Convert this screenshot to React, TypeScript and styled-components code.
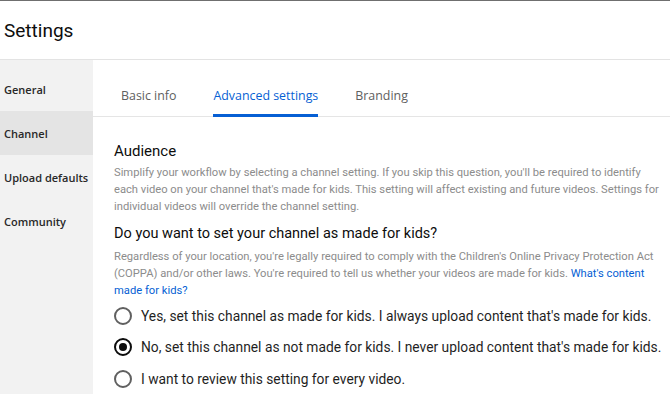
import styled, { createGlobalStyle } from 'styled-components';

const GlobalStyle = createGlobalStyle`
  html, body {
    margin: 0;
    padding: 0;
    background: #fff;
  }
  body {
    font-family: Roboto, "Liberation Sans", sans-serif;
    color: #0d0d0d;
  }
  * {
    box-sizing: border-box;
  }
`;

const Page = styled.div`
  display: flex;
  flex-direction: column;
  height: 394px;
  overflow: hidden;
  border-top: 1px solid #6f6f6f;
`;

const Header = styled.header`
  flex-shrink: 0;
  height: 59px;
  padding: 0 4px;
  display: flex;
  align-items: center;
  border-bottom: 1px solid #e3e3e3;
`;

const Title = styled.h1`
  margin: 0;
  font-size: 19px;
  font-weight: 400;
  color: #0d0d0d;
`;

const Body = styled.div`
  flex: 1;
  display: flex;
  min-height: 0;
`;

const Sidebar = styled.nav`
  width: 93px;
  flex-shrink: 0;
  padding-top: 7px;
  background: #f2f2f2;
  display: flex;
  flex-direction: column;
`;

const SideItem = styled.div<{ $active?: boolean }>`
  height: 44px;
  flex-shrink: 0;
  padding: 0 4px;
  display: flex;
  align-items: center;
  font-family: "Open Sans", "Liberation Sans", sans-serif;
  font-size: 11px;
  font-weight: 600;
  color: #282828;
  white-space: nowrap;
  background: ${(p) => (p.$active ? '#e4e4e4' : 'transparent')};
`;

const Main = styled.main`
  flex: 1;
  min-width: 0;
  display: flex;
  flex-direction: column;
  overflow: hidden;
`;

const TabBar = styled.div`
  flex-shrink: 0;
  height: 57px;
  padding-left: 28px;
  display: flex;
  align-items: flex-end;
  gap: 37px;
  border-bottom: 1px solid #e5e5e5;
`;

const Tab = styled.div<{ $active?: boolean }>`
  line-height: 18px;
  padding-bottom: 9px;
  font-family: "Open Sans", "Liberation Sans", sans-serif;
  font-size: 12.4px;
  font-weight: ${(p) => (p.$active ? 500 : 400)};
  color: ${(p) => (p.$active ? '#065fd4' : '#606060')};
  border-bottom: 3px solid ${(p) => (p.$active ? '#065fd4' : 'transparent')};
  margin-bottom: -1px;
  white-space: nowrap;
`;

const Section = styled.section`
  flex-shrink: 0;
  padding: 24px 0 0 21px;
`;

const SectionTitle = styled.h2`
  margin: 0 0 3px;
  font-size: 15px;
  line-height: 20px;
  font-weight: 400;
  color: #0d0d0d;
`;

const Question = styled.h3`
  margin: 9px 0 4px;
  font-size: 14.5px;
  line-height: 20px;
  font-weight: 400;
  color: #0d0d0d;
`;

const Description = styled.p`
  margin: 0;
  font-size: 11.2px;
  line-height: 17px;
  color: #8c8c8c;
  white-space: nowrap;
`;

const Link = styled.a`
  color: #065fd4;
  text-decoration: none;
`;

const RadioList = styled.div`
  margin-top: 1px;
  display: flex;
  flex-direction: column;
`;

const RadioRow = styled.label`
  height: 31.5px;
  display: flex;
  align-items: center;
  gap: 9px;
  font-size: 13.8px;
  color: #1f1f1f;
  white-space: nowrap;
`;

const RadioCircle = styled.span<{ $checked?: boolean }>`
  width: 18px;
  height: 18px;
  flex-shrink: 0;
  border-radius: 50%;
  border: 2px solid ${(p) => (p.$checked ? '#0d0d0d' : '#606060')};
  display: flex;
  align-items: center;
  justify-content: center;

  &::after {
    content: '';
    width: 8px;
    height: 8px;
    border-radius: 50%;
    background: ${(p) => (p.$checked ? '#0d0d0d' : 'transparent')};
  }
`;

const SIDE_ITEMS = ['General', 'Channel', 'Upload defaults', 'Community'];
const TABS = ['Basic info', 'Advanced settings', 'Branding'];

const OPTIONS = [
  { label: "Yes, set this channel as made for kids. I always upload content that's made for kids.", checked: false },
  { label: "No, set this channel as not made for kids. I never upload content that's made for kids.", checked: true },
  { label: 'I want to review this setting for every video.', checked: false },
];

export default function App() {
  return (
    <>
      <GlobalStyle />
      <Page>
        <Header>
          <Title>Settings</Title>
        </Header>
        <Body>
          <Sidebar>
            {SIDE_ITEMS.map((item) => (
              <SideItem key={item} $active={item === 'Channel'}>
                {item}
              </SideItem>
            ))}
          </Sidebar>
          <Main>
            <TabBar>
              {TABS.map((tab) => (
                <Tab key={tab} $active={tab === 'Advanced settings'}>
                  {tab}
                </Tab>
              ))}
            </TabBar>
            <Section>
              <SectionTitle>Audience</SectionTitle>
              <Description>
                Simplify your workflow by selecting a channel setting. If you skip this question, you'll be required to identify
                <br />
                each video on your channel that's made for kids. This setting will affect existing and future videos. Settings for
                <br />
                individual videos will override the channel setting.
              </Description>
              <Question>Do you want to set your channel as made for kids?</Question>
              <Description>
                Regardless of your location, you're legally required to comply with the Children's Online Privacy Protection Act
                <br />
                (COPPA) and/or other laws. You're required to tell us whether your videos are made for kids.{' '}
                <Link href="#">
                  What's content
                  <br />
                  made for kids?
                </Link>
              </Description>
              <RadioList>
                {OPTIONS.map((opt) => (
                  <RadioRow key={opt.label}>
                    <RadioCircle $checked={opt.checked} />
                    {opt.label}
                  </RadioRow>
                ))}
              </RadioList>
            </Section>
          </Main>
        </Body>
      </Page>
    </>
  );
}
